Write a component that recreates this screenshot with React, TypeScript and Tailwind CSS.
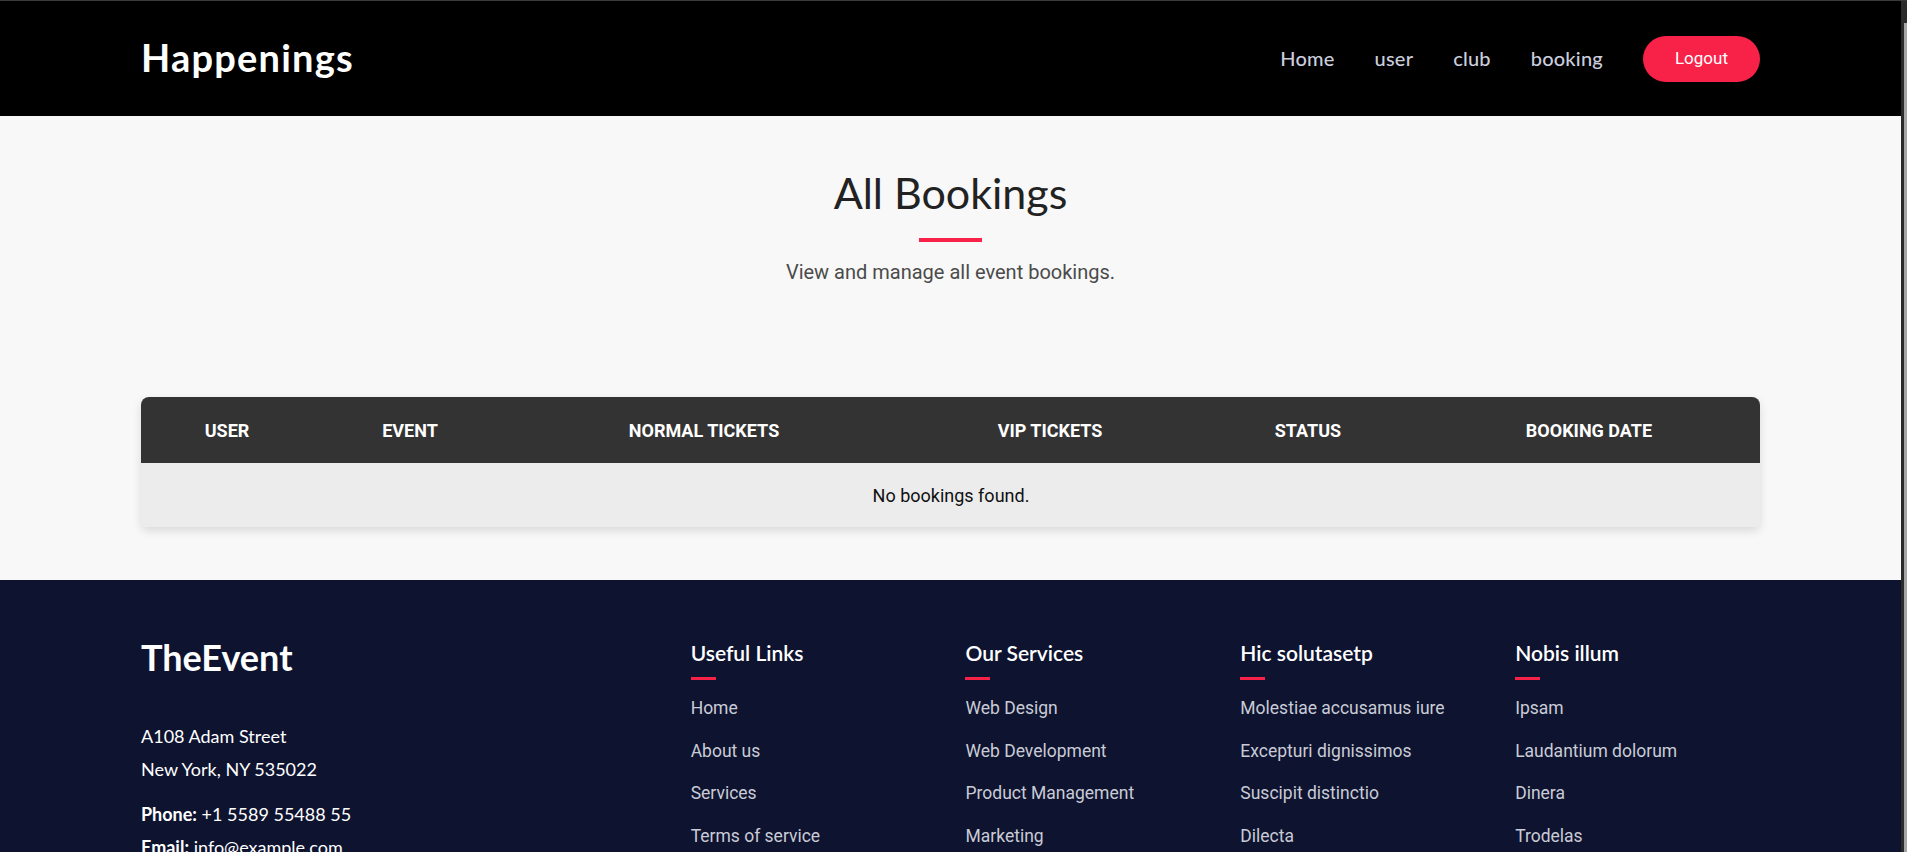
import React from "react";

const navLinks = ["Home", "user", "club", "booking"];

const columns = [
  { label: "USER", width: "w-[172px]" },
  { label: "EVENT", width: "w-[194px]" },
  { label: "NORMAL TICKETS", width: "w-[394px]" },
  { label: "VIP TICKETS", width: "w-[298px]" },
  { label: "STATUS", width: "w-[218px]" },
  { label: "BOOKING DATE", width: "w-[344px]" },
];

const footerCols = [
  {
    title: "Useful Links",
    links: ["Home", "About us", "Services", "Terms of service", "Privacy policy"],
  },
  {
    title: "Our Services",
    links: ["Web Design", "Web Development", "Product Management", "Marketing", "Graphic Design"],
  },
  {
    title: "Hic solutasetp",
    links: ["Molestiae accusamus iure", "Excepturi dignissimos", "Suscipit distinctio", "Dilecta", "Sit quas consectetur"],
  },
  {
    title: "Nobis illum",
    links: ["Ipsam", "Laudantium dolorum", "Dinera", "Trodelas", "Flexo"],
  },
];

const raleway = "font-['Lato','Open_Sans',sans-serif]";
const roboto = "font-['Roboto','Liberation_Sans',sans-serif]";

const Header = () => (
  <header className="h-[115px] bg-black">
    <div className="mx-auto flex h-full w-[1619px] items-center justify-between">
      <a className={`${raleway} -mt-[3px] text-[38px] font-bold leading-none tracking-[1.2px] text-white`}>
        Happenings
      </a>
      <nav className="flex items-center gap-10">
        {navLinks.map((l) => (
          <a
            key={l}
            className={`${raleway} -mt-[2px] text-[20px] font-medium tracking-[0.2px] text-[#cacedd]`}
          >
            {l}
          </a>
        ))}
        <button
          className={`${roboto} h-[46px] rounded-full bg-[#f82249] px-8 text-[17px] text-white`}
        >
          Logout
        </button>
      </nav>
    </div>
  </header>
);

const Bookings = () => (
  <section className="h-[464px] bg-[#f8f8f8] pt-[51px]">
    <div className="text-center">
      <h2 className={`${raleway} text-[43px] font-normal leading-[52px] text-[#222222]`}>
        All Bookings
      </h2>
      <div className="mx-auto mt-[19px] h-[4px] w-[63px] bg-[#f82249]" />
      <p className={`${roboto} mt-[16px] text-[20px] leading-[28px] text-[#4b4b4b]`}>
        View and manage all event bookings.
      </p>
    </div>
    <div className="mx-auto mt-[111px] w-[1619px] overflow-hidden rounded-t-lg rounded-b-md shadow-[0_4px_10px_rgba(0,0,0,0.12)]">
      <table className={`${roboto} w-full table-fixed border-collapse`}>
        <thead>
          <tr className="h-[66px] bg-[#333333]">
            {columns.map((c) => (
              <th
                key={c.label}
                className={`${c.width} text-center text-[18px] font-bold text-white`}
              >
                {c.label}
              </th>
            ))}
          </tr>
        </thead>
        <tbody>
          <tr className="h-[64px] bg-[#ececec]">
            <td colSpan={6} className="text-center text-[18px] text-[#111111]">
              No bookings found.
            </td>
          </tr>
        </tbody>
      </table>
    </div>
  </section>
);

const Footer = () => (
  <footer className="bg-[#0e1330] pt-[55px] pb-16">
    <div className="mx-auto grid w-[1619px] grid-cols-6 gap-x-[30px]">
      <div className="col-span-2">
        <h3 className={`${raleway} text-[36px] font-bold leading-[44px] text-white`}>
          TheEvent
        </h3>
        <div className={`${raleway} mt-[41px] text-[18px] leading-[33px] text-white`}>
          <p>A108 Adam Street</p>
          <p>New York, NY 535022</p>
          <p className="mt-[12px]">
            <span className="font-bold">Phone:</span> +1 5589 55488 55
          </p>
          <p>
            <span className="font-bold">Email:</span> info@example.com
          </p>
        </div>
      </div>
      {footerCols.map((col) => (
        <div key={col.title} className="pt-[4px]">
          <h4 className={`${raleway} text-[21px] font-semibold leading-[28px] text-white`}>
            {col.title}
          </h4>
          <div className="mt-[10px] h-[3px] w-[25px] bg-[#f82249]" />
          <ul className={`${roboto} mt-[7px] text-[17.5px] text-[#c9ccd6]`}>
            {col.links.map((l) => (
              <li key={l} className="leading-[42.5px]">
                {l}
              </li>
            ))}
          </ul>
        </div>
      ))}
    </div>
  </footer>
);

export default function App() {
  return (
    <div className="flex h-[852px] overflow-hidden border-t border-[#3a3a3a] bg-[#2b2b2b]">
      <div className="w-[1901px] shrink-0">
        <Header />
        <Bookings />
        <Footer />
      </div>
      <div className="flex flex-1 justify-end pt-[22px]">
        <div className="h-full w-[3px] bg-[#a6a6a6]" />
      </div>
    </div>
  );
}
